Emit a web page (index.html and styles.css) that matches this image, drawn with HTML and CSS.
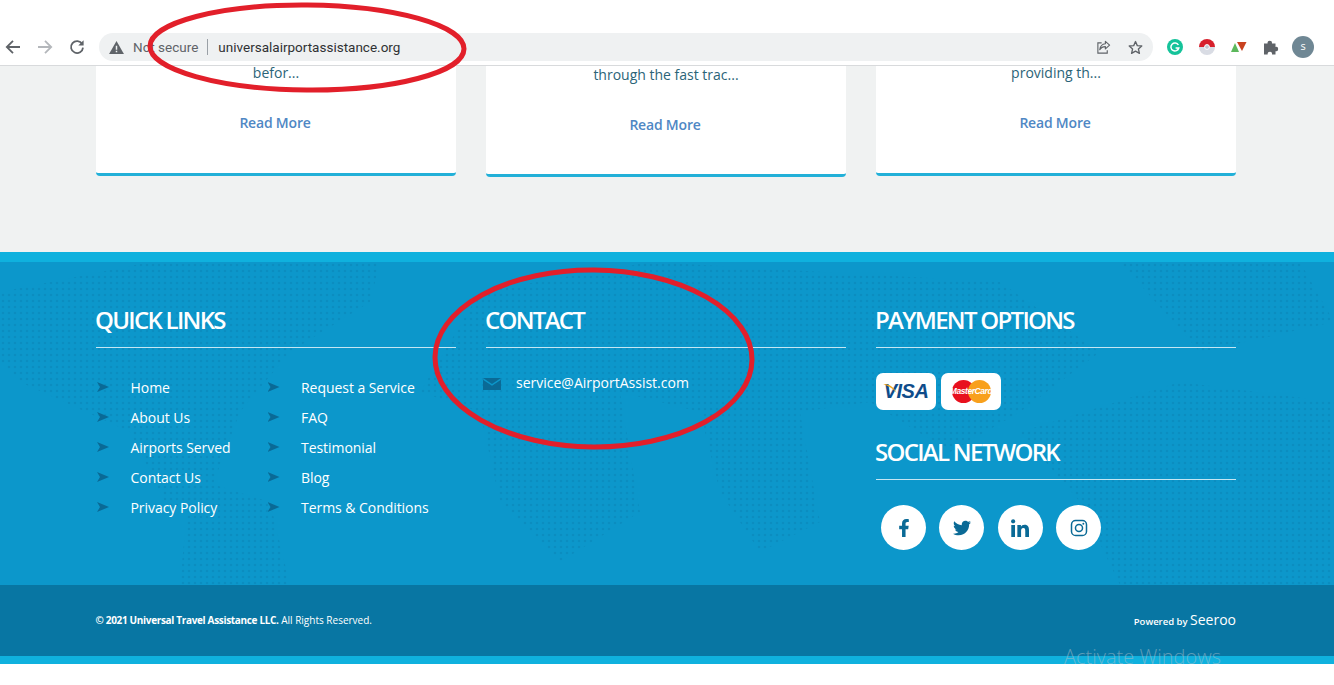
FILE: index.html
```html
<!DOCTYPE html>
<html lang="en">
<head>
    <meta charset="UTF-8">
    <title>Universal Airport Assistance</title>
    <link rel="stylesheet" href="styles.css">
</head>
<body>
    <!-- browser toolbar -->
    <div class="toolbar">
        <div class="nav-btns">
            <svg class="nav-icon" viewBox="0 0 16 16"><path d="M15 8H2M8 1.800 1.800 8 8 14.200" fill="none" stroke="#5f6368" stroke-width="1.800"/></svg>
            <svg class="nav-icon" viewBox="0 0 16 16"><path d="M1 8h13M8 1.800 14.200 8 8 14.200" fill="none" stroke="#b4b7bb" stroke-width="1.800"/></svg>
            <svg class="nav-icon" viewBox="0 0 16 16"><path d="M13.200 5A6 6 0 1 0 14 8.600" fill="none" stroke="#5f6368" stroke-width="1.800"/><path d="M14.600 1.200v5.300H9.300z" fill="#5f6368"/></svg>
        </div>
        <div class="omnibox">
            <svg class="warn-icon" viewBox="0 0 16 14"><path d="M8 0 16 14H0z" fill="#5f6368"/><path d="M7.200 5h1.600v4.400H7.200zM7.200 10.400h1.600V12H7.200z" fill="#eff1f2"/></svg>
            <span class="not-secure">Not secure</span>
            <span class="omni-sep"></span>
            <span class="url">universalairportassistance.org</span>
            <svg class="omni-icon" viewBox="0 0 16 16"><path d="M10 1.500 14.500 5.500 10 9.500V7C7 7 5.300 8 4 10.400 4.400 7 6 4.400 10 4z" fill="none" stroke="#5f6368" stroke-width="1.200" stroke-linejoin="round"/><path d="M6 3H2v11h10v-3" fill="none" stroke="#5f6368" stroke-width="1.200"/></svg>
            <svg class="omni-icon" viewBox="0 0 16 16"><path d="M8 1.600 9.900 6l4.800.4-3.600 3.200 1.100 4.700L8 11.800l-4.200 2.500 1.100-4.700L1.300 6.400 6.100 6z" fill="none" stroke="#5f6368" stroke-width="1.400" stroke-linejoin="round"/></svg>
        </div>
        <div class="extensions">
            <svg class="ext" viewBox="0 0 16 16"><circle cx="8" cy="8" r="8" fill="#15c39a"/><path d="M11.400 6A4 4 0 1 0 11.800 9H8.600" fill="none" stroke="#fff" stroke-width="1.500"/></svg>
            <svg class="ext" viewBox="0 0 16 16"><path d="M0 8a8 8 0 0 1 16 0z" fill="#d7202c"/><path d="M0 8a8 8 0 0 0 16 0z" fill="#d9dce4"/><circle cx="8" cy="8" r="2.400" fill="#c3c7d2" stroke="#fff"/></svg>
            <svg class="ext" viewBox="0 0 16 16"><path d="M0 13 4 4 8 13z" fill="#5cb85c"/><path d="M6 3h9.500L11 12z" fill="#c8421f"/></svg>
            <svg class="ext" viewBox="0 0 16 16"><path d="M1 4.500h3.600a2.200 2.200 0 1 1 4.300 0h3.600v3.400a2.200 2.200 0 1 1 0 4.300v3.300H9a2.200 2.200 0 1 0-4.300 0H1z" fill="#5f6368"/></svg>
            <span class="avatar">s</span>
        </div>
    </div>

    <div class="page-top">
        <div class="cards">
            <div class="card">
                <p>befor...</p>
                <a href="#">Read More</a>
            </div>
            <div class="card card-low">
                <p>through the fast trac...</p>
                <a href="#">Read More</a>
            </div>
            <div class="card">
                <p>providing th...</p>
                <a href="#">Read More</a>
            </div>
        </div>
    </div>

    <footer>
        <div class="footer-main">
            <svg class="map" viewBox="0 0 1334 323" preserveAspectRatio="none">
                <defs>
                    <pattern id="dots" width="6" height="6" patternUnits="userSpaceOnUse">
                        <circle cx="3" cy="3" r="1.300" fill="#0b8dc0"/>
                    </pattern>
                </defs>
                <g fill="url(#dots)">
                    <path d="M0 30 150 0 380 0 370 40 290 90 240 150 210 230 170 250 130 170 20 120 0 100z"/>
                    <path d="M190 215 270 240 290 323 180 323z"/>
                    <path d="M480 30 650 0 1000 20 1100 90 1020 150 950 190 870 140 800 150 820 260 760 290 720 230 700 150 620 130 640 250 560 300 500 240 480 150 420 130z"/>
                    <path d="M1020 170 1180 120 1334 140 1334 323 1120 323 1080 240z"/>
                    <path d="M1120 0 1300 0 1334 60 1200 90z"/>
                </g>
            </svg>
            <div class="footer-cols">
                <div class="col">
                    <h3>QUICK LINKS</h3>
                    <div class="link-cols">
                        <ul class="links">
                            <li>Home</li>
                            <li>About Us</li>
                            <li>Airports Served</li>
                            <li>Contact Us</li>
                            <li>Privacy Policy</li>
                        </ul>
                        <ul class="links">
                            <li>Request a Service</li>
                            <li>FAQ</li>
                            <li>Testimonial</li>
                            <li>Blog</li>
                            <li>Terms &amp; Conditions</li>
                        </ul>
                    </div>
                </div>
                <div class="col">
                    <h3>CONTACT</h3>
                    <div class="contact-row">
                        <svg class="mail" viewBox="0 0 18 12"><path d="M0 0h18L9 6z" fill="#0a6a96"/><path d="M0 1.800 9 7.800 18 1.800V12H0z" fill="#0a6a96"/></svg>
                        <span>service@AirportAssist.com</span>
                    </div>
                </div>
                <div class="col">
                    <h3>PAYMENT OPTIONS</h3>
                    <div class="pay-row">
                        <div class="pay-card visa">
                            <svg class="visa-flick" viewBox="0 0 12 8"><path d="M0 0C5 0 9 2 12 8 9 4 5 2 0 0z" fill="#f0a51e"/></svg>
                            <span>VISA</span>
                        </div>
                        <div class="pay-card master">
                            <span class="mc-red"></span>
                            <span class="mc-orange"></span>
                            <span class="mc-text">MasterCard</span>
                        </div>
                    </div>
                    <h3 class="social-title">SOCIAL NETWORK</h3>
                    <div class="social-row">
                        <a class="social" href="#"><svg viewBox="0 0 320 512"><path d="M279 288l14-93h-89v-60c0-25 12-50 52-50h41V6s-37-6-72-6c-73 0-121 45-121 125v70H23v93h81v224h100V288z"/></svg></a>
                        <a class="social" href="#"><svg viewBox="0 0 512 512"><path d="M459 152c.3 4.500.3 9 .3 13.600C459.300 304 354 464 161 464c-59 0-115-17-161-47 8.400 1 16.600 1.300 25.300 1.300 49 0 94-16.600 130-45-46-1-85-31-98-73 6.500 1 13 1.600 19.800 1.600 9.400 0 18.800-1.300 27.600-3.600-48-9.700-84-52-84-103v-1.300c14 7.800 30 12.600 47.300 13.300-28-19-47-51-47-87 0-19.500 5-37 14-53 52 64 129 105 216 110-1.600-7.800-2.600-16-2.600-24 0-58 47-105 105-105 30 0 58 12.700 77 33 24-4.500 47-13.600 67-26-8 24.700-25 45.500-46 58 21-2.300 41-8 60-16-14 20.800-32 39-52 54z"/></svg></a>
                        <a class="social" href="#"><svg viewBox="0 0 448 448"><path d="M100 448H7V149h93zM53 108C24 108 0 84 0 54a54 54 0 0 1 107 0c0 30-24 54-54 54zm395 340h-93V302c0-35-1-79-48-79-48 0-56 38-56 77v148h-93V149h89v41h1c12-24 43-48 88-48 94 0 112 62 112 142z"/></svg></a>
                        <a class="social" href="#"><svg viewBox="0 0 24 24"><rect x="2" y="2" width="20" height="20" rx="5.500" fill="none" stroke="#0a6a96" stroke-width="2"/><circle cx="12" cy="12" r="4.700" fill="none" stroke="#0a6a96" stroke-width="2"/><circle cx="17.800" cy="6.200" r="1.300"/></svg></a>
                    </div>
                </div>
            </div>
        </div>
        <div class="footer-bottom">
            <div class="copyright"><b>&copy; 2021 Universal Travel Assistance LLC.</b> All Rights Reserved.</div>
            <div class="powered">Powered by <span>Seeroo</span></div>
        </div>
    </footer>

    <!-- red marks drawn on top of the screenshot -->
    <svg class="marks" viewBox="0 0 1334 685">
        <ellipse cx="307" cy="47.500" rx="157" ry="42.500" transform="rotate(0.500 307 47.500)"/>
        <ellipse cx="593.500" cy="358.500" rx="158.500" ry="88.500" transform="rotate(0.500 593.500 358.500)"/>
    </svg>
    <div class="activate">Activate Windows</div>
</body>
</html>
```

FILE: styles.css
```css
* {
    box-sizing: border-box;
}

html, body {
    height: 685px;
    overflow: hidden;
}

body {
    position: relative;
    margin: 0;
    background-color: white;
    font-family: 'Open Sans', sans-serif;
}

/* Toolbar */
.toolbar {
    display: flex;
    align-items: center;
    height: 66px;
    padding: 33px 0 4px 0;
    border-bottom: 1px solid #d8dadc;
    background-color: white;
}

.nav-btns {
    display: flex;
    gap: 16px;
    width: 99px;
    padding-left: 5px;
}

.nav-icon {
    width: 16px;
    height: 16px;
}

.omnibox {
    display: flex;
    align-items: center;
    width: 1054px;
    height: 28px;
    padding: 0 10px;
    border-radius: 14px;
    background-color: #eff1f2;
}

.warn-icon {
    width: 15px;
    height: 13px;
    margin-right: 9px;
}

.not-secure {
    font-family: 'Roboto', sans-serif;
    font-size: 13.5px;
    color: #5f6368;
}

.omni-sep {
    width: 1px;
    height: 16px;
    margin: 0 10px 0 9px;
    background-color: #9aa0a6;
}

.url {
    flex: 1;
    font-family: 'Roboto', sans-serif;
    font-size: 13.5px;
    color: #303134;
}

.omni-icon {
    width: 15px;
    height: 15px;
    margin-left: 17px;
}

.extensions {
    display: flex;
    align-items: center;
    gap: 16px;
    padding-left: 14px;
}

.ext {
    width: 16px;
    height: 16px;
}

.avatar {
    width: 22px;
    height: 22px;
    margin-left: -3px;
    border-radius: 50%;
    background-color: #6f8794;
    color: white;
    font-size: 11px;
    line-height: 20px;
    text-align: center;
}

/* Cards */
.page-top {
    height: 186px;
    background-color: #f0f2f2;
}

.cards {
    display: grid;
    grid-template-columns: repeat(3, 360px);
    gap: 30px;
    align-items: start;
    padding-left: 96px;
}

.card {
    height: 110px;
    border-bottom: 3px solid #22b0d8;
    border-radius: 0 0 4px 4px;
    background-color: white;
    text-align: center;
}

.card-low {
    height: 111px;
}

.card p {
    margin: 0;
    padding-bottom: 31px;
    font-size: 14px;
    line-height: 14px;
    color: #2b6478;
}

.card-low p {
    padding-top: 2px;
}

.card a {
    margin-left: -2px;
    font-size: 14px;
    font-weight: 600;
    line-height: 22px;
    letter-spacing: -0.2px;
    color: #4f87c4;
    text-decoration: none;
}

/* Footer */
footer {
    border-top: 10px solid #0fb1de;
    border-bottom: 8px solid #0fb1de;
}

.footer-main {
    position: relative;
    height: 323px;
    overflow: hidden;
    background-color: #0c97cb;
}

.map {
    position: absolute;
    left: 0;
    top: 0;
    width: 100%;
    height: 100%;
}

.footer-cols {
    position: relative;
    display: grid;
    grid-template-columns: repeat(3, 360px);
    gap: 30px;
    padding: 42px 0 0 96px;
}

.col h3 {
    height: 44px;
    margin: 0;
    border-bottom: 1px solid #c5e6f3;
    font-size: 24px;
    font-weight: 600;
    line-height: 31px;
    letter-spacing: -1.7px;
    text-indent: -1px;
    color: white;
}

.link-cols {
    display: flex;
    padding-top: 25px;
}

.links {
    width: 170.5px;
    margin: 0;
    padding: 0;
    list-style: none;
}

.links li {
    position: relative;
    height: 30px;
    padding-left: 34.5px;
    font-size: 14px;
    line-height: 30px;
    letter-spacing: -0.05px;
    color: white;
}

.links li::before {
    content: "";
    position: absolute;
    left: 1px;
    top: 9px;
    width: 12px;
    height: 10px;
    background-color: #0a6a96;
    clip-path: polygon(0 0, 100% 50%, 0 100%, 25% 50%);
}

.contact-row {
    display: flex;
    align-items: center;
    gap: 15px;
    margin: 25px 0 0 -3px;
    font-size: 14px;
    line-height: 20px;
    color: white;
}

.mail {
    width: 18px;
    height: 12px;
    margin-top: 2px;
}

.pay-row {
    display: flex;
    gap: 5px;
    padding-top: 25px;
}

.pay-card {
    position: relative;
    width: 60px;
    height: 37px;
    border-radius: 7px;
    background-color: white;
}

.visa span {
    display: block;
    font-family: 'Liberation Sans', sans-serif;
    font-size: 20px;
    font-weight: bold;
    font-style: italic;
    line-height: 37px;
    text-align: center;
    letter-spacing: -0.5px;
    color: #0f4c8a;
}

.visa-flick {
    position: absolute;
    left: 7px;
    top: 11px;
    width: 14px;
    height: 9px;
}

.mc-red, .mc-orange {
    position: absolute;
    top: 7px;
    width: 23px;
    height: 23px;
    border-radius: 50%;
}

.mc-red {
    left: 11px;
    background-color: #e8101e;
}

.mc-orange {
    left: 27px;
    background-color: #f8a01c;
}

.mc-text {
    position: absolute;
    left: 0;
    right: 0;
    top: 11px;
    font-family: 'Liberation Sans', sans-serif;
    font-size: 8.5px;
    font-weight: bold;
    font-style: italic;
    line-height: 15px;
    text-align: center;
    letter-spacing: -0.45px;
    color: white;
}

.col h3.social-title {
    height: 44px;
    margin-top: 26px;
}

.social-row {
    display: flex;
    gap: 13.4px;
    padding: 25px 0 0 5px;
}

.social {
    display: flex;
    align-items: center;
    justify-content: center;
    width: 45px;
    height: 45px;
    border-radius: 50%;
    background-color: white;
}

.social svg {
    width: 18px;
    height: 18px;
    fill: #0a6a96;
}

.footer-bottom {
    display: flex;
    align-items: center;
    justify-content: space-between;
    height: 71px;
    padding: 0 98px 2px 95.5px;
    background-color: #0876a3;
    color: white;
}

.copyright {
    font-size: 10px;
}

.copyright b {
    letter-spacing: -0.33px;
}

.powered {
    font-size: 9.5px;
    font-weight: 600;
}

.powered span {
    font-size: 14px;
    font-weight: 400;
}

/* Overlays */
.marks {
    position: absolute;
    left: 0;
    top: 0;
    width: 1334px;
    height: 685px;
    pointer-events: none;
}

.marks ellipse {
    fill: none;
    stroke: #e21f2a;
    stroke-width: 5;
}

.activate {
    position: absolute;
    left: 1064px;
    top: 645px;
    font-family: 'Open Sans', sans-serif;
    font-size: 20px;
    font-weight: 300;
    line-height: 24px;
    color: rgba(170, 190, 200, 0.55);
}
```
